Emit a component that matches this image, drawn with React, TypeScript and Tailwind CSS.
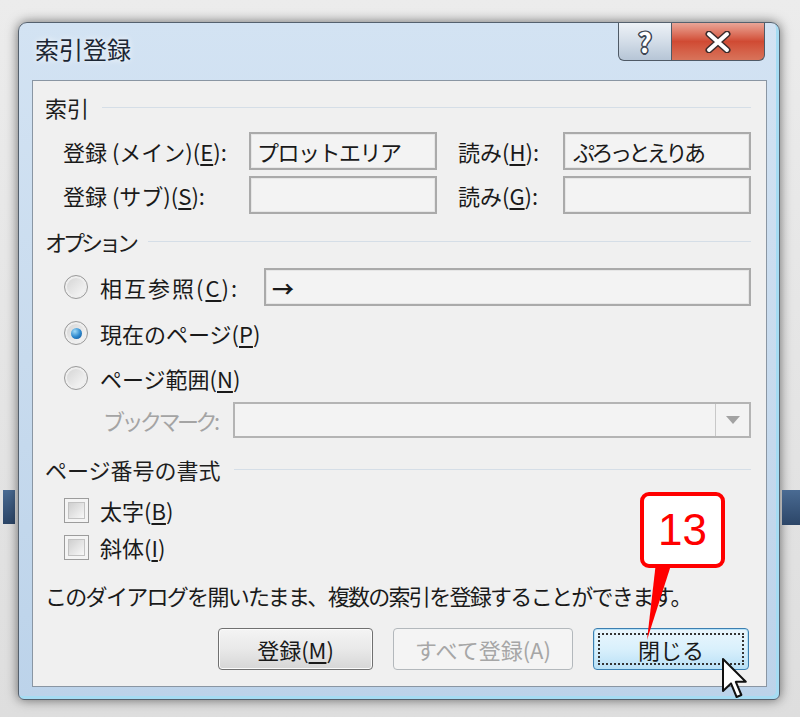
import type { ReactNode } from 'react'

// Windows 7 style "索引登録" dialog with a numbered callout

function U({ children }: { children: ReactNode }) {
  return <span className="underline underline-offset-[3px] decoration-[1.5px]">{children}</span>
}

function SectionHeader({ label, className = '' }: { label: ReactNode; className?: string }) {
  return (
    <div className={`flex items-center h-[28px] pl-[12px] pr-[15px] ${className}`}>
      <span className="text-[22px] leading-none text-[#1e1e1e] whitespace-nowrap">{label}</span>
      <div className="flex-1 h-px bg-[#d5dee7] ml-[13px]" />
    </div>
  )
}

function TextBox({ value, className = '' }: { value?: ReactNode; className?: string }) {
  return (
    <div
      className={`h-[38px] border-2 border-[#aaaaaa] bg-[#f3f3f3] shadow-[inset_0_0_0_1px_#e6e6e6] flex items-center px-[6px] text-[22px] leading-none text-[#1a1a1a] whitespace-nowrap overflow-hidden ${className}`}
    >
      {value}
    </div>
  )
}

function Radio({ checked = false }: { checked?: boolean }) {
  return (
    <div className="w-[24px] h-[24px] rounded-full border border-[#9a9a9a] bg-linear-to-br from-[#d2d2d2] to-[#fbfbfb] shadow-[inset_0_0_0_2px_#eeeeee] flex items-center justify-center shrink-0">
      {checked && (
        <div className="w-[11px] h-[11px] rounded-full bg-[radial-gradient(circle_at_35%_30%,#9fdaf8,#2a86cc_55%,#14508f)]" />
      )}
    </div>
  )
}

function Checkbox() {
  return (
    <div className="w-[25px] h-[25px] border border-[#9c9c9c] bg-[#f4f4f4] p-[3px] shrink-0">
      <div className="w-full h-full bg-linear-to-br from-[#cfcfcf] to-[#f8f8f8] border border-[#c2c2c2]" />
    </div>
  )
}

export default function App() {
  return (
    <div className="w-[800px] h-[717px] overflow-hidden bg-linear-to-b from-[#ececec] to-[#dedede] flex font-['Noto_Sans_CJK_JP','Noto_Sans',sans-serif]">
      {/* background window edge, left */}
      <div className="w-[18px] shrink-0">
        <div className="mt-[490px] ml-[3px] w-[12px] h-[34px] bg-linear-to-b from-[#4a6b93] to-[#2c4668]" />
      </div>

      {/* dialog */}
      <div className="mt-[22px] w-[762px] h-[678px] shrink-0 rounded-t-[9px] rounded-b-[6px] border border-[#55616e] bg-linear-to-b from-[#d3e3f3] via-[#c8dbee] to-[#bcd3ea] shadow-[0_0_12px_rgba(0,0,0,0.55),inset_-3px_-3px_0_#a6dcf3] flex flex-col">
        {/* title bar */}
        <div className="h-[57px] flex items-start shrink-0">
          <div className="h-[52px] flex items-center pl-[16px] text-[24px] leading-none text-[#1c2633] [text-shadow:0_0_6px_#ffffff]">
            索引登録
          </div>
          <div className="ml-auto mr-[14px] flex">
            <div className="w-[54px] h-[38px] rounded-bl-[6px] border border-t-0 border-[#4f5a66] bg-linear-to-b from-[#eef2f7] via-[#d3dde8] to-[#b6c5d6] flex items-center justify-center">
              <span className="text-[27px] font-bold leading-none text-white [text-shadow:1.5px_0_0_#3d4652,-1.5px_0_0_#3d4652,0_1.5px_0_#3d4652,0_-1.5px_0_#3d4652,1px_1px_0_#3d4652,-1px_-1px_0_#3d4652,1px_-1px_0_#3d4652,-1px_1px_0_#3d4652]">
                ?
              </span>
            </div>
            <div className="w-[93px] h-[38px] rounded-br-[6px] border border-t-0 border-l-0 border-[#4f5a66] bg-linear-to-b from-[#e9a597] via-[#d04a33] to-[#d8735a] flex items-center justify-center">
              <svg width="30" height="22" viewBox="0 0 30 22">
                <path d="M6 3 L24 19 M24 3 L6 19" stroke="#3b2b2b" strokeWidth="7" strokeLinecap="round" />
                <path d="M6 3 L24 19 M24 3 L6 19" stroke="#ffffff" strokeWidth="4" strokeLinecap="round" />
              </svg>
            </div>
          </div>
        </div>

        {/* client area */}
        <div className="relative flex-1 ml-[13px] mr-[12px] mb-[12px] border border-[#8a96a3] bg-[#f0f0f0] flex flex-col pt-[12px]">
          <SectionHeader label="索引" />

          <div className="mt-[11px] flex items-center pl-[30px]">
            <div className="w-[186px] text-[22px] leading-none text-[#1a1a1a] whitespace-nowrap">
              登録 (メイン)(<U>E</U>):
            </div>
            <TextBox className="w-[188px] tracking-[-1.5px]" value="プロットエリア" />
            <div className="ml-[21px] w-[105px] text-[22px] leading-none text-[#1a1a1a] whitespace-nowrap">
              読み(<U>H</U>):
            </div>
            <TextBox className="w-[188px] tracking-[-3.5px] pl-[8px]" value="ぷろっとえりあ" />
          </div>

          <div className="mt-[6px] flex items-center pl-[30px]">
            <div className="w-[186px] text-[22px] leading-none text-[#1a1a1a] whitespace-nowrap">
              登録 (サブ)(<U>S</U>):
            </div>
            <TextBox className="w-[188px]" />
            <div className="ml-[21px] w-[105px] text-[22px] leading-none text-[#1a1a1a] whitespace-nowrap">
              読み(<U>G</U>):
            </div>
            <TextBox className="w-[188px]" />
          </div>

          <SectionHeader className="mt-[13px]" label={<span className="tracking-[-4px]">オプション</span>} />

          <div className="mt-[13px] h-[38px] flex items-center pl-[31px] pr-[15px]">
            <Radio />
            <div className="ml-[12px] w-[164px] text-[22px] leading-none text-[#1a1a1a] tracking-[2px] whitespace-nowrap">
              相互参照(<U>C</U>):
            </div>
            <TextBox className="flex-1 font-bold text-[20px]" value="→" />
          </div>

          <div className="mt-[8px] h-[38px] flex items-center pl-[31px]">
            <Radio checked />
            <div className="ml-[12px] text-[22px] leading-none text-[#1a1a1a] whitespace-nowrap">
              現在のページ(<U>P</U>)
            </div>
          </div>

          <div className="mt-[7px] h-[38px] flex items-center pl-[31px]">
            <Radio />
            <div className="ml-[12px] text-[22px] leading-none text-[#1a1a1a] whitespace-nowrap">
              ページ範囲(<U>N</U>)
            </div>
          </div>

          <div className="mt-[5px] h-[36px] flex items-center pl-[70px] pr-[15px]">
            <div className="w-[130px] text-[22px] leading-none text-[#a4a4a4] tracking-[-3.5px] whitespace-nowrap">
              ブックマーク:
            </div>
            <div className="flex-1 h-[36px] border-2 border-[#b4b4b4] bg-[#f3f3f3] flex justify-end">
              <div className="w-[34px] h-full border-l border-[#c8c8c8] flex items-center justify-center">
                <svg width="14" height="8" viewBox="0 0 14 8">
                  <path d="M0 0 L14 0 L7 8 Z" fill="#a2a2a2" />
                </svg>
              </div>
            </div>
          </div>

          <SectionHeader className="mt-[17px]" label="ページ番号の書式" />

          <div className="mt-[10px] h-[34px] flex items-center pl-[31px]">
            <Checkbox />
            <div className="ml-[11px] text-[22px] leading-none text-[#1a1a1a] whitespace-nowrap">
              太字(<U>B</U>)
            </div>
          </div>

          <div className="mt-[3px] h-[34px] flex items-center pl-[31px]">
            <Checkbox />
            <div className="ml-[11px] text-[22px] leading-none text-[#1a1a1a] whitespace-nowrap">
              斜体(<U>I</U>)
            </div>
          </div>

          <div className="mt-[16px] h-[30px] flex items-center pl-[12px] text-[22px] leading-none text-[#1a1a1a] tracking-[-1.7px] whitespace-nowrap">
            このダイアログを開いたまま、複数の索引を登録することができます。
          </div>

          <div className="mt-[18px] flex justify-end gap-[20px] pr-[17px]">
            <div className="w-[155px] h-[42px] rounded-[4px] border border-[#707070] bg-linear-to-b from-[#f4f4f4] via-[#e9e9e9] to-[#d6d6d6] shadow-[inset_0_0_0_1px_#fbfbfb] flex items-center justify-center text-[22px] leading-none text-[#1a1a1a]">
              登録(<U>M</U>)
            </div>
            <div className="w-[180px] h-[42px] rounded-[4px] border border-[#b3b8bc] bg-[#f4f4f4] flex items-center justify-center text-[22px] leading-none text-[#a6a6a6]">
              すべて登録(A)
            </div>
            <div className="w-[156px] h-[42px] rounded-[4px] border border-[#3c7fb1] bg-linear-to-b from-[#eaf6fd] via-[#d9f0fc] to-[#b9e0f6] shadow-[inset_0_0_0_1px_#b6e2f8] p-[4px]">
              <div className="w-full h-full border-2 border-dotted border-[#333] flex items-center justify-center text-[22px] leading-none text-[#1a1a1a]">
                閉じる
              </div>
            </div>
          </div>

          {/* callout 13 */}
          <div className="absolute left-[607px] top-[411px] w-[85px] h-[76px]">
            <svg className="absolute left-0 top-[70px]" width="40" height="82" viewBox="0 0 40 82">
              <path d="M16 0 L32 0 L7 78 Z" fill="#ff0000" />
            </svg>
            <div className="absolute inset-0 rounded-[9px] border-[4px] border-[#ff0000] bg-white flex items-center justify-center">
              <span className="font-['Liberation_Sans',sans-serif] text-[44px] leading-none text-[#ff0000]">13</span>
            </div>
          </div>

          {/* mouse cursor */}
          <svg className="absolute left-[688px] top-[576px]" width="28" height="44" viewBox="0 0 14 22">
            <path
              d="M1 1 L1 17 L5 13.2 L7.8 20 L10.2 19 L7.4 12.4 L12.4 12.4 Z"
              fill="#ffffff"
              stroke="#111111"
              strokeWidth="1"
              strokeLinejoin="round"
            />
          </svg>
        </div>
      </div>

      {/* background window edge, right */}
      <div className="flex-1">
        <div className="mt-[490px] ml-[2px] h-[35px] bg-linear-to-b from-[#4a6b93] to-[#2c4668]" />
      </div>
    </div>
  )
}
